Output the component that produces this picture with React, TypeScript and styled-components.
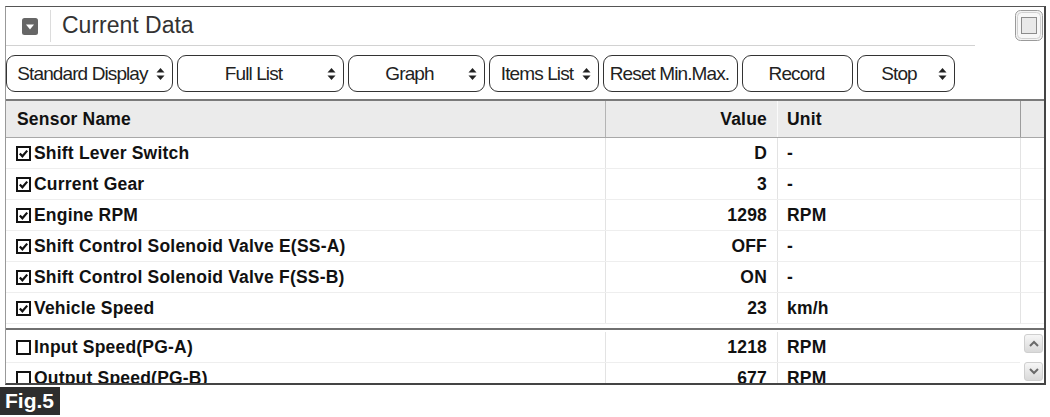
import styled, { createGlobalStyle } from "styled-components";

const GlobalStyle = createGlobalStyle`
  html, body {
    margin: 0;
    padding: 0;
    background: #ffffff;
  }
  body {
    width: 1050px;
    height: 417px;
    overflow: hidden;
    font-family: "Liberation Sans", Arial, sans-serif;
    color: #111;
  }
`;

type Row = { name: string; value: string; unit: string; checked: boolean };

const pinnedRows: Row[] = [
  { name: "Shift Lever Switch", value: "D", unit: "-", checked: true },
  { name: "Current Gear", value: "3", unit: "-", checked: true },
  { name: "Engine RPM", value: "1298", unit: "RPM", checked: true },
  { name: "Shift Control Solenoid Valve E(SS-A)", value: "OFF", unit: "-", checked: true },
  { name: "Shift Control Solenoid Valve F(SS-B)", value: "ON", unit: "-", checked: true },
  { name: "Vehicle Speed", value: "23", unit: "km/h", checked: true },
];

const otherRows: Row[] = [
  { name: "Input Speed(PG-A)", value: "1218", unit: "RPM", checked: false },
  { name: "Output Speed(PG-B)", value: "677", unit: "RPM", checked: false },
];

const toolButtons = [
  { label: "Standard Display", width: 167, select: true },
  { label: "Full List", width: 167, select: true },
  { label: "Graph", width: 137, select: true },
  { label: "Items List", width: 110, select: true },
  { label: "Reset Min.Max.", width: 135, select: false },
  { label: "Record", width: 111, select: false },
  { label: "Stop", width: 98, select: true },
];

const SelectArrows = () => (
  <svg width="9" height="14" viewBox="0 0 9 14">
    <polygon points="0.5,5.5 4.5,1 8.5,5.5" fill="#222" />
    <polygon points="0.5,8.5 8.5,8.5 4.5,13" fill="#222" />
  </svg>
);

const CheckBox = ({ checked }: { checked: boolean }) => (
  <svg width="15" height="15" viewBox="0 0 15 15">
    <rect x="1" y="1" width="13" height="13" fill="#fff" stroke="#111" strokeWidth="2" />
    {checked && (
      <path d="M3.8 7.4 L6.4 10.3 L11.2 4.6" fill="none" stroke="#111" strokeWidth="2.2" />
    )}
  </svg>
);

const CollapseIcon = () => (
  <svg width="16" height="17" viewBox="0 0 16 17">
    <rect x="0" y="0" width="16" height="17" rx="2.5" fill="#666" />
    <polygon points="4,6.5 12,6.5 8,11.5" fill="#fff" />
  </svg>
);

const WindowIcon = () => (
  <svg width="28" height="31" viewBox="0 0 28 31">
    <rect x="0.5" y="0.5" width="27" height="30" rx="5" fill="#f3f3f3" stroke="#9a9a9a" />
    <rect x="2.5" y="2.5" width="23" height="26" rx="4" fill="#f7f7f7" stroke="#d0d0d0" />
    <rect x="6.5" y="7.5" width="15" height="16" fill="#e9e9e9" stroke="#8c8c8c" />
  </svg>
);

const Chevron = ({ up }: { up: boolean }) => (
  <svg width="10" height="7" viewBox="0 0 10 7">
    <path
      d={up ? "M1 6 L5 2 L9 6" : "M1 1 L5 5 L9 1"}
      fill="none"
      stroke="#6a6a6a"
      strokeWidth="2"
    />
  </svg>
);

const DataRow = ({ row }: { row: Row }) => (
  <RowLine>
    <NameCell>
      <CheckBox checked={row.checked} />
      <span>{row.name}</span>
    </NameCell>
    <ValueCell>{row.value}</ValueCell>
    <UnitCell>{row.unit}</UnitCell>
  </RowLine>
);

const App = () => {
  return (
    <>
      <GlobalStyle />
      <Page>
        <Frame>
          <TitleBar>
            <TitleMain>
              <CollapseIcon />
              <TitleDivider />
              <TitleText>Current Data</TitleText>
            </TitleMain>
            <TitleSide>
              <WindowIcon />
            </TitleSide>
          </TitleBar>

          <Toolbar>
            {toolButtons.map((b) => (
              <ToolButton key={b.label} $width={b.width}>
                <ToolLabel>{b.label}</ToolLabel>
                {b.select && <SelectArrows />}
              </ToolButton>
            ))}
          </Toolbar>

          <HeaderRow>
            <HeaderName>Sensor Name</HeaderName>
            <HeaderValue>Value</HeaderValue>
            <HeaderUnit>Unit</HeaderUnit>
            <HeaderExtra />
          </HeaderRow>

          <PinnedSection>
            {pinnedRows.map((r) => (
              <PinnedLine key={r.name}>
                <DataRow row={r} />
                <ExtraCell />
              </PinnedLine>
            ))}
          </PinnedSection>

          <LowerSection>
            <LowerRows>
              {otherRows.map((r) => (
                <DataRow key={r.name} row={r} />
              ))}
            </LowerRows>
            <ScrollBar>
              <ScrollButton>
                <Chevron up />
              </ScrollButton>
              <ScrollButton>
                <Chevron up={false} />
              </ScrollButton>
            </ScrollBar>
          </LowerSection>
        </Frame>
        <FigLabel>Fig.5</FigLabel>
      </Page>
    </>
  );
};

export default App;

const Page = styled.div`
  padding: 6px 0 0 5px;
`;

const Frame = styled.div`
  box-sizing: border-box;
  width: 1041px;
  border-top: 1px solid #555;
  border-left: 1px solid #999;
  border-right: 2px solid #444;
  border-bottom: 2px solid #444;
`;

const TitleBar = styled.div`
  display: flex;
  height: 39px;
`;

const TitleMain = styled.div`
  box-sizing: border-box;
  width: 969px;
  display: flex;
  align-items: center;
  padding-left: 16px;
  border-bottom: 1px solid #d2d2d2;
`;

const TitleDivider = styled.div`
  width: 1px;
  height: 32px;
  margin-left: 12px;
  background: #dcdcdc;
`;

const TitleText = styled.div`
  margin-left: 11px;
  margin-top: -2px;
  font-size: 23px;
  color: #333;
`;

const TitleSide = styled.div`
  flex: 1;
  display: flex;
  justify-content: flex-end;
  align-items: flex-start;
  padding: 3px 1px 0 0;
`;

const Toolbar = styled.div`
  display: flex;
  gap: 4px;
  padding: 9px 0 7px 0;
`;

const ToolButton = styled.div<{ $width: number }>`
  box-sizing: border-box;
  width: ${(p) => p.$width}px;
  height: 37px;
  display: flex;
  align-items: center;
  gap: 3px;
  padding: 0 7px 0 5px;
  border: 1.5px solid #333;
  border-radius: 9px;
  background: #fff;
`;

const ToolLabel = styled.span`
  flex: 1;
  text-align: center;
  font-size: 19px;
  letter-spacing: -0.9px;
  color: #222;
  white-space: nowrap;
`;

const columns = "599px 172px 243px 24px";

const HeaderRow = styled.div`
  display: grid;
  grid-template-columns: ${columns};
  height: 36px;
  border-top: 2px solid #7a7a7a;
  border-bottom: 1px solid #a8a8a8;
  background: #ebebeb;
  font-weight: bold;
  font-size: 17.5px;
  letter-spacing: 0.2px;
`;

const HeaderCell = styled.div`
  display: flex;
  align-items: center;
`;

const HeaderName = styled(HeaderCell)`
  padding-left: 11px;
`;

const HeaderValue = styled(HeaderCell)`
  justify-content: flex-end;
  padding-right: 10px;
  border-left: 1px solid #b4b4b4;
`;

const HeaderUnit = styled(HeaderCell)`
  padding-left: 9px;
  border-left: 1px solid #fafafa;
`;

const HeaderExtra = styled(HeaderCell)`
  border-left: 1px solid #9c9c9c;
`;

const PinnedSection = styled.div`
  padding-bottom: 4px;
  border-bottom: 2px solid #707070;
`;

const PinnedLine = styled.div`
  display: grid;
  grid-template-columns: 1014px 24px;
`;

const RowLine = styled.div`
  display: grid;
  grid-template-columns: 599px 172px 243px;
  height: 31px;
  box-sizing: border-box;
  border-bottom: 1px solid #eeeeee;
  font-weight: bold;
  font-size: 17.5px;
  letter-spacing: 0.2px;
  color: #111;
`;

const NameCell = styled.div`
  display: flex;
  align-items: center;
  gap: 3px;
  padding-left: 10px;
  white-space: nowrap;
`;

const ValueCell = styled.div`
  display: flex;
  align-items: center;
  justify-content: flex-end;
  padding-right: 10px;
  border-left: 1px solid #e3e3e3;
`;

const UnitCell = styled.div`
  display: flex;
  align-items: center;
  padding-left: 9px;
  border-left: 1px solid #e3e3e3;
`;

const ExtraCell = styled.div`
  border-left: 1px solid #e3e3e3;
  border-bottom: 1px solid #eeeeee;
`;

const LowerSection = styled.div`
  display: flex;
  height: 53px;
  overflow: hidden;
`;

const LowerRows = styled.div`
  width: 1014px;
  padding-top: 2px;
`;

const ScrollBar = styled.div`
  flex: 1;
  display: flex;
  flex-direction: column;
  align-items: flex-end;
  gap: 9px;
  padding: 4px 1px 0 0;
`;

const ScrollButton = styled.div`
  box-sizing: border-box;
  width: 19px;
  height: 19px;
  display: flex;
  align-items: center;
  justify-content: center;
  border: 1px solid #cfcfcf;
  border-radius: 3px;
  background: linear-gradient(#f6f6f6, #d9d9d9);
`;

const FigLabel = styled.div`
  box-sizing: border-box;
  width: 60px;
  height: 28px;
  margin: 2px 0 0 -5px;
  padding-left: 5px;
  display: flex;
  align-items: center;
  background: #2e2e2e;
  color: #fff;
  font-weight: bold;
  font-size: 21px;
`;
